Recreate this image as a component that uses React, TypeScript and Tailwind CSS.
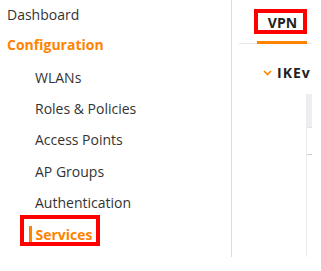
import React from "react";

const font = { fontFamily: '"Open Sans", "Liberation Sans", sans-serif' };

const subItems = ["WLANs", "Roles & Policies", "Access Points", "AP Groups", "Authentication"];

const Chevron = () => (
  <svg width="9" height="6" viewBox="0 0 9 6" className="shrink-0">
    <path d="M1 1l3.5 3.5L8 1" fill="none" stroke="#ff8300" strokeWidth="1.6" />
  </svg>
);

export default function App() {
  return (
    <div className="flex w-[321px] h-[271px] bg-white text-[14px] text-[#333]" style={font}>
      {/* left nav */}
      <div className="w-[232px] h-[257px] border-r border-[#dcdcdc] shrink-0">
        <div className="pl-[7px] leading-[29px]">Dashboard</div>
        <div className="pl-[7px] leading-[32.5px] font-bold text-[#ff8300]">Configuration</div>
        {subItems.map((s) => (
          <div key={s} className="pl-[35px] leading-[31.4px]">
            {s}
          </div>
        ))}
        <div className="relative pl-[29px] leading-[31.4px] flex items-center">
          <span className="w-[2.5px] h-[16px] bg-[#ff8300] mr-[4px]" />
          <span className="font-bold text-[#ff8300]">Services</span>
          <div className="absolute left-[20px] top-[-4px] w-[80px] h-[31px] border-[4px] border-[#ff0000]" />
        </div>
      </div>

      {/* right panel */}
      <div className="w-[80px] h-[257px] overflow-hidden pl-[7px] shrink-0">
        <div className="w-[73px] h-[44px] border-b border-[#e8e8e8] flex items-end">
          <div className="relative ml-[18px] w-[50px] h-[44px] -mb-px border-b-[3px] border-[#ff8300] flex justify-center pt-[13px]">
            <span className="font-bold text-[#222] leading-[20px] ml-[1px]">VPN</span>
            <div className="absolute left-[-3px] top-[9px] w-[53px] h-[25px] border-[4px] border-[#ff0000]" />
          </div>
        </div>
        <div className="flex items-center pl-[24px] mt-[19px] h-[20px] w-[200px]">
          <Chevron />
          <span className="font-bold text-[#222] ml-[5px] leading-[20px] tracking-[1px] whitespace-nowrap">IKEv</span>
        </div>
        <div className="ml-[67px] mt-[11px] w-[200px] h-[163px] border-l border-[#ececec]">
          <div className="h-[34px] bg-[#ebeef3] border-b border-[#dfe2e6]" />
          <div className="h-[27px] border-b border-[#cfcfcf]" />
        </div>
      </div>
    </div>
  );
}
